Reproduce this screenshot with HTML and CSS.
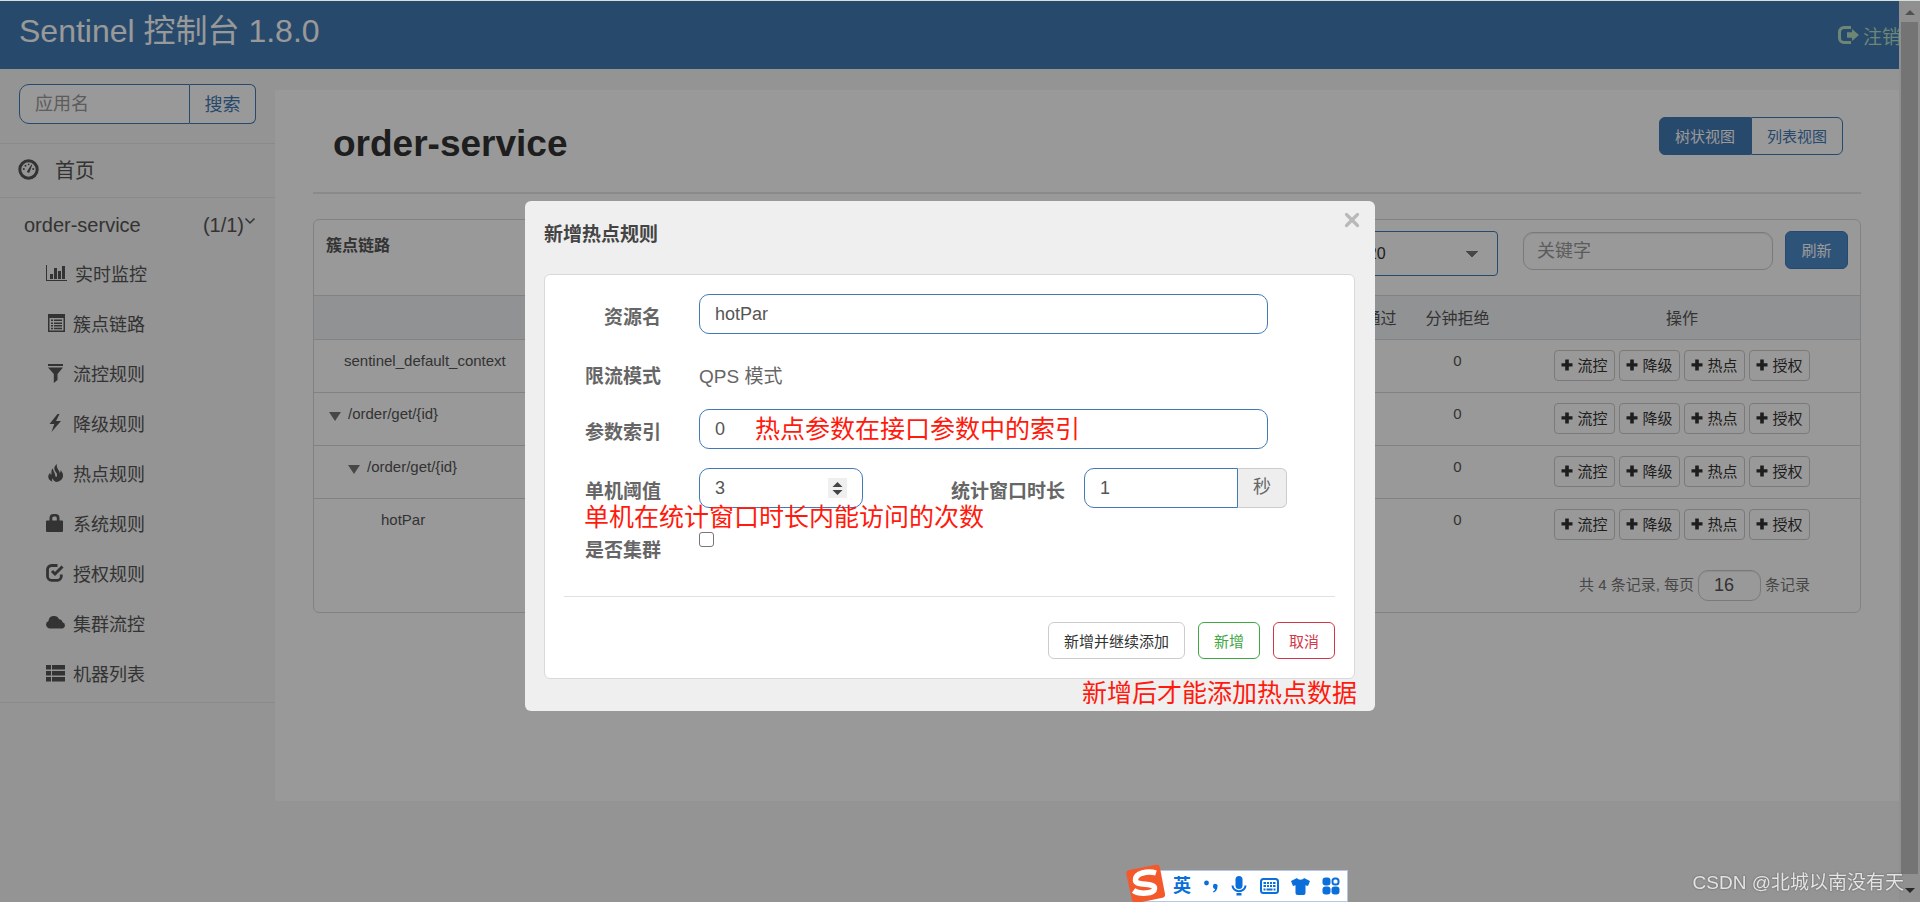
FILE: index.html
```html
<!DOCTYPE html>
<html lang="zh-CN">
<head>
<meta charset="utf-8">
<title>Sentinel 控制台</title>
<link rel="stylesheet" href="styles.css">
</head>
<body>
<svg class="defs" aria-hidden="true">
  <symbol id="plus" viewBox="0 0 12 12"><path d="M4.2 0.6h3.6v3.6h3.7v3.4H7.8v3.8H4.2V7.6H0.5V4.2h3.7z"/></symbol>
</svg>
<div class="app">
  <div class="page">
    <header class="topbar">
      <div class="brand">Sentinel 控制台 1.8.0</div>
      <a class="logout" href="#"><svg width="22" height="18" viewBox="0 0 22 18"><path d="M13 1.5H6A4.5 4.5 0 0 0 1.5 6v6A4.5 4.5 0 0 0 6 16.500h7" fill="none" stroke="currentColor" stroke-width="3"/><path d="M9 6.200h5V3l7 6-7 6v-3.200H9z" fill="currentColor"/></svg>注销</a>
    </header>
    <div class="body">
      <nav class="sidebar">
        <form class="app-search">
          <input type="text" aria-label="应用名" placeholder="应用名">
          <button type="button">搜索</button>
        </form>
        <a class="home" href="#"><svg width="21" height="21" viewBox="0 0 21 21"><circle cx="10.500" cy="10.500" r="8.700" fill="none" stroke="currentColor" stroke-width="3"/><path d="M9.600 11.500l3.800-6 .8.4-2.400 6.500a1.300 1.300 0 1 1-2.200-.9z" fill="currentColor"/><g fill="currentColor"><circle cx="5.800" cy="10" r="1"/><circle cx="7.500" cy="6.800" r="1"/><circle cx="10.600" cy="5.300" r=".9"/><circle cx="15.200" cy="10" r="1"/></g></svg>首页</a>
        <div class="service"><span>order-service</span><span>(1/1)<svg width="12" height="20" viewBox="0 0 12 20"><path d="M1.500 5.500L6 10l4.500-4.500" fill="none" stroke="currentColor" stroke-width="1.500"/></svg></span></div>
        <ul class="menu">
          <li><a class="wide" href="#"><svg width="21" height="18" viewBox="0 0 21 18"><path d="M0 1h1v15h20v1H0z"/><path d="M4 10h3v5H4zM8 4h3v11H8zM12 7h3v8h-3zM16 2h3v13h-3z"/></svg>实时监控</a></li>
          <li><a href="#"><svg width="20" height="18" viewBox="0 0 20 18"><path fill-rule="evenodd" d="M2 0h17v18H2zM3.500 4v12.500h14V4z"/><path d="M5 5.500h2v1.500H5zM8 5.500h8v1.500H8zM5 8.500h2v1.500H5zM8 8.500h8v1.500H8zM5 11h2v1.500H5zM8 11h8v1.500H8zM5 13.700h2v1.500H5zM8 13.700h8v1.500H8z"/></svg>簇点链路</a></li>
          <li><a href="#"><svg width="20" height="19" viewBox="0 0 20 19"><path d="M2 0h15v2H2zM2 3.500h15L11.500 10v6L7.800 19v-9z"/></svg>流控规则</a></li>
          <li><a href="#"><svg width="20" height="18" viewBox="0 0 20 18"><path d="M11.500 0L3.500 10h4.800L5.500 18 15 7h-5L13.500 0z"/></svg>降级规则</a></li>
          <li><a href="#"><svg width="20" height="18" viewBox="0 0 20 18"><path d="M11 0C7.500 2.500 7.800 5.500 9.800 8c1.800 2.200 1.500 4.300.3 5.300C9 12.500 9.500 11 8.300 8.500 7.500 7 7 6 6.800 4.500 4.500 6 6.200 8.500 5.200 11c-.8-.6-.9-1.500-.9-2.400C1.500 11.500 1 15.500 6.500 17.800c-.9-1.500-.4-2.600.3-3.600.3 1.700 1.300 3 3.200 3.800 4.500-.5 7.500-3.500 7-7.300-.3-2.300-1.700-3.200-2.400-4.700-.2 1 .2 2-.8 3C13.500 6 9.800 4 11 0z"/></svg>热点规则</a></li>
          <li><a href="#"><svg width="20" height="18" viewBox="0 0 20 18"><path fill-rule="evenodd" d="M1 6.500h2.500V4a4 4 0 0 1 4-4h2a4 4 0 0 1 4 4v2.500H16a1 1 0 0 1 1 1V17a1 1 0 0 1-1 1H1a1 1 0 0 1-1-1V7.500a1 1 0 0 1 1-1zm5.300 0h4.500V4a1.500 1.500 0 0 0-1.500-1.500H7.800A1.500 1.500 0 0 0 6.300 4z"/></svg>系统规则</a></li>
          <li><a href="#"><svg width="20" height="18" viewBox="0 0 20 18"><path d="M11.500 1.500H5.500a4 4 0 0 0-4 4v6.800a4 4 0 0 0 4 4h5.800a4 4 0 0 0 4-4V10.500" fill="none" stroke="currentColor" stroke-width="2.800"/><path d="M6 7l3 3 7.500-7.500" fill="none" stroke="currentColor" stroke-width="3"/></svg>授权规则</a></li>
          <li><a href="#"><svg width="20" height="18" viewBox="0 0 20 18"><path d="M4 14.500A3.900 3.900 0 0 1 2.500 7 5.500 5.500 0 0 1 13 5.200a3.800 3.800 0 0 1 3.500 3 3.200 3.200 0 0 1-.5 6.300z"/></svg>集群流控</a></li>
          <li><a href="#"><svg width="20" height="18" viewBox="0 0 20 18"><path d="M0 1h5v4.500H0zM6 1h13v4.500H6zM0 7h5v4.500H0zM6 7h13v4.500H6zM0 13h5v4.500H0zM6 13h13v4.500H6z"/></svg>机器列表</a></li>
        </ul>
      </nav>
      <main class="content">
        <div class="title-row">
          <h1>order-service</h1>
          <div class="view-switch"><button type="button" class="on">树状视图</button><button type="button">列表视图</button></div>
        </div>
        <section class="card">
          <div class="card-head">
            <h2>簇点链路</h2>
            <div class="filters">
              <select aria-label="机器"><option>8720</option></select>
              <input type="text" aria-label="关键字" placeholder="关键字">
              <button type="button">刷新</button>
            </div>
          </div>
          <table>
            <thead><tr><th class="name"></th><th class="num">分钟通过</th><th class="num">分钟拒绝</th><th class="ops">操作</th></tr></thead>
            <tbody>
              <tr><td class="name lv1">sentinel_default_context</td><td>0</td><td>0</td><td><div class="actions"><button type="button"><svg><use href="#plus"/></svg>流控</button><button type="button"><svg><use href="#plus"/></svg>降级</button><button type="button"><svg><use href="#plus"/></svg>热点</button><button type="button"><svg><use href="#plus"/></svg>授权</button></div></td></tr>
              <tr><td class="name lv0"><i class="caret"></i>/order/get/{id}</td><td>0</td><td>0</td><td><div class="actions"><button type="button"><svg><use href="#plus"/></svg>流控</button><button type="button"><svg><use href="#plus"/></svg>降级</button><button type="button"><svg><use href="#plus"/></svg>热点</button><button type="button"><svg><use href="#plus"/></svg>授权</button></div></td></tr>
              <tr><td class="name lv2"><i class="caret"></i>/order/get/{id}</td><td>0</td><td>0</td><td><div class="actions"><button type="button"><svg><use href="#plus"/></svg>流控</button><button type="button"><svg><use href="#plus"/></svg>降级</button><button type="button"><svg><use href="#plus"/></svg>热点</button><button type="button"><svg><use href="#plus"/></svg>授权</button></div></td></tr>
              <tr><td class="name lv3">hotPar</td><td>0</td><td>0</td><td><div class="actions"><button type="button"><svg><use href="#plus"/></svg>流控</button><button type="button"><svg><use href="#plus"/></svg>降级</button><button type="button"><svg><use href="#plus"/></svg>热点</button><button type="button"><svg><use href="#plus"/></svg>授权</button></div></td></tr>
            </tbody>
          </table>
          <div class="pager"><label for="size">共 4 条记录, 每页</label><input id="size" type="text" value="16"><span>条记录</span></div>
        </section>
      </main>
    </div>
  </div>
  <div class="scroll" aria-hidden="true"><i class="up"></i><div class="thumb"></div><i class="down"></i></div>
</div>

<div class="overlay">
  <div class="dialog" role="dialog" aria-labelledby="dlg-title">
    <div class="dialog-head">
      <h3 id="dlg-title">新增热点规则</h3>
      <button type="button" class="close" aria-label="关闭"><svg width="16" height="16" viewBox="0 0 16 16"><path d="M2.500 2.500l11 11M13.500 2.500l-11 11" stroke="currentColor" stroke-width="3.200" stroke-linecap="round"/></svg></button>
    </div>
    <form class="panel">
      <div class="row"><label for="res">资源名</label><input class="field grow" id="res" type="text" value="hotPar"></div>
      <div class="row plain"><span class="label">限流模式</span><p>QPS 模式</p></div>
      <div class="row"><label for="idx">参数索引</label><input class="field grow" id="idx" type="text" value="0"></div>
      <div class="row">
        <label for="cnt">单机阈值</label>
        <div class="number"><input class="field" id="cnt" type="number" value="3"><svg width="19" height="20" viewBox="0 0 19 20" aria-hidden="true"><rect width="19" height="20" fill="#efefef"/><path d="M4.500 9l5-5 5 5zM4.500 12l5 5 5-5z" fill="#444"/></svg></div>
        <label class="second" for="win">统计窗口时长</label>
        <div class="group"><input class="field" id="win" type="text" value="1"><span>秒</span></div>
      </div>
      <div class="row plain"><label for="cluster">是否集群</label><input class="check" id="cluster" type="checkbox"></div>
      <div class="buttons">
        <button type="button">新增并继续添加</button>
        <button type="button" class="ok">新增</button>
        <button type="button" class="cancel">取消</button>
      </div>
    </form>
    <span class="note note-index">热点参数在接口参数中的索引</span>
    <span class="note note-count">单机在统计窗口时长内能访问的次数</span>
    <span class="note note-add">新增后才能添加热点数据</span>
  </div>
</div>

<div class="ime">
  <svg class="logo" width="42" height="40" viewBox="0 0 42 40"><path d="M4 6L31 .8q3-.6 3.800 2.200L40 30q.5 3-2.500 3.800L12 39q-4 .5-5-3L1.300 10Q1 6.800 4 6z" fill="#f4592b"/><path d="M31 9C23 6.500 9.500 9 10.500 16.500 11.500 22.500 30 18 29.500 24.500 29 30 14 30.500 8.500 26.500" fill="none" stroke="#fff" stroke-width="5.500"/></svg>
  <b>英</b>
  <svg width="16" height="16" viewBox="0 0 16 16"><circle cx="3.500" cy="5" r="2.400"/><path d="M10 8a2.300 2.300 0 1 1 4.500.8c0 3-1.800 4.900-4 5.700l-.6-1c1.200-.6 2-1.500 2.200-2.600C10.700 10.900 9.800 9.500 10 8z"/></svg>
  <svg width="16" height="20" viewBox="0 0 16 20"><rect x="4.500" y="0" width="7" height="13" rx="3.500"/><path d="M1.500 9.500a6.500 5.800 0 0 0 13 0" fill="none" stroke="#0b6fdb" stroke-width="2"/><path d="M5.500 17h5v2.500h-5z"/></svg>
  <svg width="19" height="16" viewBox="0 0 19 16"><rect x="1" y="1" width="17" height="14" rx="2.500" fill="none" stroke="#0b6fdb" stroke-width="2"/><path d="M3.500 4h2.500v2H3.500zM7 4h2v2H7zM10 4h2v2h-2zM13 4h2.500v2H13zM3.500 7h2.500v2H3.500zM7 7h2v2H7zM10 7h2v2h-2zM13 7h2.500v2H13zM3.500 10.500h2v2h-2zM6.500 10.500h6v2h-6zM13.500 10.500h2v2h-2z"/></svg>
  <svg width="19" height="17" viewBox="0 0 19 17"><path d="M6 0c1 2.200 6 2.200 7 0l6 3-2 5-2.500-.8V15q0 2-2 2h-6q-2 0-2-2V7.200L2 8 0 3z"/></svg>
  <svg width="18" height="18" viewBox="0 0 18 18"><rect x=".5" y=".5" width="8" height="8" rx="3"/><rect x=".5" y="9.500" width="8" height="8" rx="3"/><rect x="9.500" y="9.500" width="8" height="8" rx="3"/><rect x="10.500" y="1.500" width="6" height="6" rx="2.500" fill="none" stroke="#0b6fdb" stroke-width="2"/></svg>
</div>
<div class="credit">CSDN @北城以南没有天</div>
</body>
</html>
```
FILE: styles.css
```css
* { box-sizing: border-box; }
body, button, input, select {
  font-family: "Liberation Sans", "Noto Sans CJK SC", sans-serif;
}
body {
  margin: 0;
  border-top: 1px solid #d5dfdc;
  background: #f7f7f7;
  color: #555;
  font-size: 16px;
  overflow: hidden;
}
h1, h2, h3, p, ul { margin: 0; padding: 0; }
a { color: inherit; text-decoration: none; }
button, input, select { margin: 0; }
.defs { position: absolute; width: 0; height: 0; }

.app { display: flex; min-height: calc(100vh - 1px); }
.page { flex: 1; min-width: 0; }
.topbar {
  display: flex;
  justify-content: space-between;
  height: 68px;
  padding-left: 19px;
  background: #417ab5;
  color: #fff;
  overflow: hidden;
}
.brand { font-size: 32px; line-height: 60px; white-space: nowrap; }
.logout {
  display: flex;
  align-items: center;
  gap: 3px;
  margin-right: -2px;
  height: 68px;
  font-size: 19px;
  color: #b7dfc4;
  white-space: nowrap;
}
.body { display: flex; align-items: flex-start; }

.sidebar { width: 275px; flex: none; border-bottom: 1px solid #e7e7e7; padding-bottom: 4px; }
.app-search { display: flex; padding: 15px 19px 19px; border-bottom: 1px solid #e7e7e7; }
.app-search input {
  flex: 1;
  min-width: 0;
  height: 40px;
  padding: 0 15px;
  border: 1px solid #417ab5;
  border-radius: 10px 0 0 10px;
  background: #fff;
  font-size: 18px;
}
.app-search input::placeholder, .filters input::placeholder { color: #999; }
.app-search button {
  width: 66px;
  padding: 0 0 2px;
  border: 1px solid #417ab5;
  border-left: 0;
  border-radius: 0 6px 6px 0;
  background: #fff;
  color: #417ab5;
  font-size: 18px;
}
.home {
  display: flex;
  align-items: center;
  gap: 16px;
  height: 54px;
  padding: 0 0 3px 18px;
  border-bottom: 1px solid #e7e7e7;
  font-size: 20px;
}
.service { display: flex; justify-content: space-between; padding: 15px 19px 11px 24px; font-size: 20px; line-height: 24px; }
.service svg { vertical-align: -1px; }
.menu { list-style: none; }
.menu a { display: flex; align-items: center; gap: 7px; height: 50px; padding-left: 46px; font-size: 18px; }
.menu a.wide { gap: 8px; }
.menu svg, .home svg { color: #555; fill: currentColor; flex: none; }

.content {
  flex: 1;
  min-width: 0;
  margin-top: 21px;
  padding: 0 38px 188px;
  background: #fff;
}
.title-row {
  display: flex;
  justify-content: space-between;
  padding: 27px 18px 37px 20px;
  border-bottom: 2px solid #e7e7e7;
}
h1 { font-size: 37px; line-height: 40px; padding-top: 7px; margin-bottom: -9px; color: #333; }
.view-switch { display: flex; }
.view-switch button {
  width: 92px;
  height: 38px;
  padding: 0 0 2px;
  border: 1px solid #417ab5;
  border-radius: 0 6px 6px 0;
  background: #fff;
  color: #417ab5;
  font-size: 15px;
}
.view-switch .on { border-radius: 6px 0 0 6px; background: #417ab5; color: #fff; }

.card { margin-top: 25px; border: 1px solid #d9d9d9; border-radius: 6px; }
.card-head { display: flex; justify-content: space-between; height: 75px; padding: 11px 12px 0; }
h2 { font-size: 16px; line-height: 30px; color: #555; }
.filters { display: flex; align-items: flex-start; }
.filters select {
  appearance: none;
  width: 230px;
  height: 45px;
  margin-right: 25px;
  padding: 0 0 0 81px;
  border: 1px solid #417ab5;
  border-radius: 4px;
  background: linear-gradient(to top right, transparent 50%, #777 0) 197px 19px / 6px 7px no-repeat,
              linear-gradient(to top left, transparent 50%, #777 0) 203px 19px / 6px 7px no-repeat, #fff;
  color: #333;
  font-size: 16px;
}
.filters input {
  width: 250px;
  height: 38px;
  margin: 1px 12px 0 0;
  padding: 0 13px;
  border: 1px solid #ccc;
  border-radius: 10px;
  box-shadow: inset 0 1px 1px rgba(0, 0, 0, .08);
  font-size: 18px;
}
.filters button {
  width: 63px;
  height: 38px;
  padding: 0 0 2px;
  border: 1px solid #417ab5;
  border-radius: 6px;
  background: #4e8bca;
  color: #fff;
  font-size: 15px;
}
table { width: 100%; border-collapse: collapse; table-layout: fixed; }
th {
  height: 44px;
  padding: 0 0 2px;
  border: solid #d9d9d9;
  border-width: 1px 0;
  background: #f2f4f6;
  font-weight: normal;
}
.num { width: 93px; }
.ops { width: 356px; }
td { padding: 10px 0 11px; vertical-align: top; text-align: center; font-size: 15px; line-height: 22px; }
tbody tr + tr td { border-top: 1px solid #d9d9d9; }
td.name { text-align: left; }
.lv1 { padding-left: 30px; }
.lv0 { padding-left: 15px; }
.lv2 { padding-left: 34px; }
.lv3 { padding-left: 67px; }
.caret { display: inline-block; margin-right: 7px; border: solid transparent; border-width: 9px 6px 0; border-top-color: #777; vertical-align: -2px; }
.actions { display: flex; justify-content: center; gap: 4px; }
.actions button {
  display: flex;
  align-items: center;
  justify-content: center;
  gap: 4px;
  width: 61px;
  height: 31px;
  padding: 0 0 2px;
  border: 1px solid #ccc;
  border-radius: 4px;
  background: #fff;
  color: #333;
  font-size: 15px;
}
.actions svg { width: 12px; height: 12px; fill: #333; }
.pager {
  display: flex;
  align-items: center;
  justify-content: flex-end;
  gap: 4px;
  padding: 19px 50px 11px 0;
  font-size: 15px;
  line-height: 22px;
  color: #777;
}
.pager label, .pager span { padding-bottom: 2px; }
.pager input {
  width: 63px;
  height: 31px;
  padding: 0 15px;
  border: 1px solid #ccc;
  border-radius: 10px;
  box-shadow: inset 0 1px 1px rgba(0, 0, 0, .08);
  color: #555;
  font-size: 18px;
}

.scroll {
  display: flex;
  flex-direction: column;
  align-items: center;
  gap: 7px;
  width: 21px;
  padding: 9px 2px;
  background: #f1f1f1;
}
.thumb { flex: 1; width: 17px; background: #c1c1c1; }
.up, .down { border: solid transparent; border-width: 0 5px 5px; border-bottom-color: #888; }
.down { border-width: 5px 5px 0; border-top-color: #444; margin-top: 7px; }

.overlay {
  position: fixed;
  inset: 1px 0 0;
  padding: 200px 20px 0 0;
  background: rgba(0, 0, 0, .4);
}
.dialog {
  position: relative;
  width: 850px;
  margin: 0 auto;
  padding: 0 20px 32px 19px;
  border-radius: 6px;
  background: #efefef;
}
.dialog-head { display: flex; justify-content: space-between; height: 73px; }
h3 { font-size: 19px; line-height: 24px; padding-top: 22px; color: #444; }
.close { height: 16px; margin: 11px -5px 0 0; padding: 0; border: 0; background: none; color: #b9b9b9; }
.panel {
  display: flex;
  flex-direction: column;
  gap: 19px;
  padding: 19px;
  border: 1px solid #d9d9d9;
  border-radius: 6px;
  background: #fff;
  color: #666;
}
.row { display: flex; align-items: flex-start; font-size: 19px; line-height: 22px; }
.row.plain { height: 37px; }
.row label, .label { width: 97px; margin-right: 38px; padding-top: 13px; font-weight: bold; text-align: right; white-space: nowrap; }
.row p { padding-top: 13px; }
.row label.second { flex: 1; width: auto; margin-right: 19px; }
.field {
  height: 40px;
  padding: 0 15px;
  border: 1px solid #417ab5;
  border-radius: 10px;
  background: #fff;
  color: #555;
  font-size: 18px;
}
.grow { flex: 1; margin-right: 67px; }
.number { position: relative; width: 164px; }
.number input { width: 100%; appearance: textfield; }
.number svg { position: absolute; right: 16px; top: 10px; }
.group { display: flex; margin-right: 48px; }
.group input { width: 154px; border-radius: 10px 0 0 10px; }
.group span {
  width: 49px;
  border: 1px solid #ccc;
  border-left: 0;
  border-radius: 0 6px 6px 0;
  background: #eee;
  line-height: 36px;
  text-align: center;
  font-size: 18px;
}
.check { appearance: none; width: 15px; height: 15px; margin-top: 5px; border: 1px solid #767676; border-radius: 3px; background: #fff; }
.buttons {
  display: flex;
  justify-content: flex-end;
  gap: 13px;
  margin-top: 13px;
  padding-top: 25px;
  border-top: 1px solid #e1e1e1;
}
.buttons button {
  height: 37px;
  padding: 0 15px;
  border: 1px solid #ccc;
  border-radius: 6px;
  background: #fff;
  color: #333;
  font-size: 15px;
}
.buttons .ok { border-color: #3fa744; color: #3fa744; }
.buttons .cancel { border-color: #d2364a; color: #d2364a; }
.note { position: absolute; color: #ff1a0d; font-size: 25px; line-height: 30px; white-space: nowrap; }
.note-index { left: 230px; top: 213px; }
.note-count { left: 59px; top: 301px; }
.note-add { right: 18px; bottom: 3px; }

.ime {
  position: fixed;
  left: 1140px;
  bottom: 0;
  display: flex;
  align-items: center;
  justify-content: space-between;
  width: 208px;
  height: 32px;
  padding: 0 7px 0 32px;
  border: 1px solid #b4c8e6;
  background: #fff;
  color: #0b6fdb;
  fill: currentColor;
  font-size: 18px;
}
.ime b { line-height: 30px; }
.ime svg { flex: none; }
.ime .logo { position: absolute; left: -16px; bottom: -3px; }
.credit {
  position: fixed;
  right: 16px;
  bottom: 6px;
  color: #e4e4e4;
  font-size: 19px;
  line-height: 26px;
  text-shadow: 0 0 2px #555;
}
```
